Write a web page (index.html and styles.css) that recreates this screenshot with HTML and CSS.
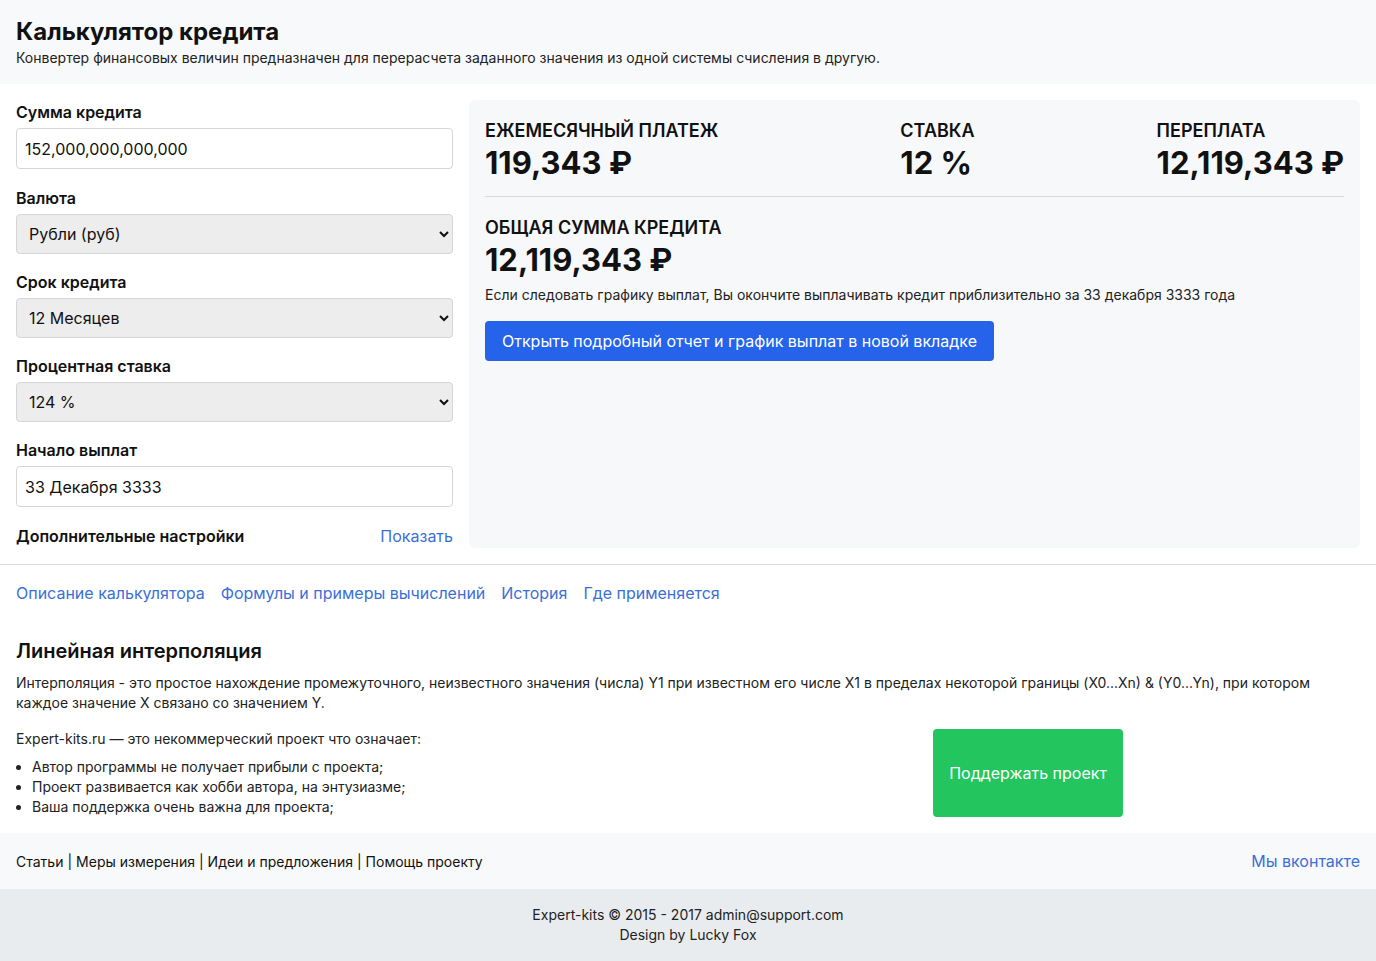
FILE: index.html
```html
<!DOCTYPE html>
<html lang="ru">
<head>
<meta charset="utf-8">
<title>Калькулятор кредита</title>
<link rel="stylesheet" href="styles.css">
</head>
<body>
<header class="page-head">
  <h1 class="page-title">Калькулятор кредита</h1>
  <p class="page-sub">Конвертер финансовых величин предназначен для перерасчета заданного значения из одной системы счисления в другую.</p>
</header>

<main class="calc">
  <form class="calc-form">
    <label class="field-label">Сумма кредита</label>
    <input class="field-input" type="text" value="152,000,000,000,000">

    <label class="field-label">Валюта</label>
    <select class="field-select"><option>Рубли (руб)</option></select>

    <label class="field-label">Срок кредита</label>
    <select class="field-select"><option>12 Месяцев</option></select>

    <label class="field-label">Процентная ставка</label>
    <select class="field-select"><option>124 %</option></select>

    <label class="field-label">Начало выплат</label>
    <input class="field-input" type="text" value="33 Декабря 3333">

    <div class="extra-row">
      <span class="extra-title">Дополнительные настройки</span>
      <a class="link" href="#">Показать</a>
    </div>
  </form>

  <section class="result">
    <div class="stats">
      <div class="stat">
        <div class="stat-label">Ежемесячный платеж</div>
        <div class="stat-value">119,343 ₽</div>
      </div>
      <div class="stat">
        <div class="stat-label">Ставка</div>
        <div class="stat-value">12 %</div>
      </div>
      <div class="stat">
        <div class="stat-label">Переплата</div>
        <div class="stat-value">12,119,343 ₽</div>
      </div>
    </div>
    <hr class="result-rule">
    <div class="stat-label">Общая сумма кредита</div>
    <div class="stat-value">12,119,343 ₽</div>
    <p class="result-note">Если следовать графику выплат, Вы окончите выплачивать кредит приблизительно за 33 декабря 3333 года</p>
    <a class="btn-primary" href="#">Открыть подробный отчет и график выплат в новой вкладке</a>
  </section>
</main>

<hr class="divider">

<nav class="tabs">
  <a class="link" href="#">Описание калькулятора</a>
  <a class="link" href="#">Формулы и примеры вычислений</a>
  <a class="link" href="#">История</a>
  <a class="link" href="#">Где применяется</a>
</nav>

<section class="article">
  <h2 class="article-title">Линейная интерполяция</h2>
  <p class="article-text">Интерполяция - это простое нахождение промежуточного, неизвестного значения (числа) Y1 при известном его числе X1 в пределах некоторой границы (X0...Xn) &amp; (Y0...Yn), при котором каждое значение X связано со значением Y.</p>
  <div class="support">
    <div class="support-text">
      <p class="support-intro">Expert-kits.ru — это некоммерческий проект что означает:</p>
      <ul class="support-list">
        <li>Автор программы не получает прибыли с проекта;</li>
        <li>Проект развивается как хобби автора, на энтузиазме;</li>
        <li>Ваша поддержка очень важна для проекта;</li>
      </ul>
    </div>
    <div class="support-side">
      <a class="btn-green" href="#">Поддержать проект</a>
    </div>
  </div>
</section>

<footer>
  <div class="foot-nav">
    <div class="foot-links">
      <a href="#">Статьи</a><span class="sep">|</span><a href="#">Меры измерения</a><span class="sep">|</span><a href="#">Идеи и предложения</a><span class="sep">|</span><a href="#">Помощь проекту</a>
    </div>
    <a class="link" href="#">Мы вконтакте</a>
  </div>
  <div class="foot-copy">
    <div>Expert-kits © 2015 - 2017 admin@support.com</div>
    <div>Design by Lucky Fox</div>
  </div>
</footer>
</body>
</html>
```

FILE: styles.css
```css
* { box-sizing: border-box; }
html, body { margin: 0; padding: 0; }
body {
  font-family: Inter, "Noto Sans", sans-serif;
  color: #111;
  background: #fff;
}
a { text-decoration: none; }
.link { color: #3a6fd8; font-size: 16px; }

.page-head {
  background: #f8f9fa;
  padding: 16px 16px 17px;
}
.page-title {
  margin: 0;
  font-size: 24px;
  font-weight: 700;
  line-height: 32px;
}
.page-sub {
  margin: 1px 0 0;
  font-size: 14px;
  line-height: 18px;
  color: #222;
}

.calc {
  display: flex;
  gap: 16px;
  padding: 16px;
  align-items: stretch;
}
.calc-form {
  width: 437px;
  flex: none;
  display: flex;
  flex-direction: column;
}
.field-label {
  font-weight: 600;
  font-size: 16px;
  line-height: 24px;
  margin-bottom: 4px;
}
.field-input, .field-select {
  height: 41px;
  border: 1px solid #d6d6d6;
  border-radius: 4px;
  font-family: inherit;
  font-size: 16px;
  color: #111;
  margin-bottom: 16px;
}
.field-input {
  padding: 0 8px;
  background: #fff;
  margin-bottom: 17px;
}
.field-select {
  height: 40px;
  padding: 0 8px;
  background-color: #ededed;
}
.extra-row {
  display: flex;
  justify-content: space-between;
  align-items: center;
  line-height: 24px;
}
.extra-title { font-weight: 600; font-size: 16px; }

.result {
  flex: 1;
  background: #f7f8fa;
  border-radius: 6px;
  padding: 18px 16px 16px;
}
.stats {
  display: flex;
  justify-content: space-between;
}
.stat-label {
  font-size: 18px;
  font-weight: 600;
  text-transform: uppercase;
  line-height: 26px;
}
.stat-value {
  font-size: 31px;
  font-weight: 700;
  line-height: 38px;
}
.result-rule {
  border: 0;
  border-top: 1px solid #d9d9d9;
  margin: 14px 0 18px;
}
.result-note {
  margin: 6px 0 16px;
  font-size: 14px;
  line-height: 20px;
  color: #222;
}
.btn-primary {
  display: inline-block;
  background: #2563eb;
  color: #fff;
  font-size: 16px;
  line-height: 24px;
  padding: 8px 17px;
  border-radius: 4px;
}

.divider {
  border: 0;
  border-top: 1px solid #d9d9d9;
  margin: 0;
}
.tabs {
  display: flex;
  gap: 16px;
  padding: 16px 16px 0;
  line-height: 24px;
}
.article {
  padding: 33px 16px 16px;
}
.article-title {
  margin: 0;
  font-size: 20px;
  font-weight: 600;
  line-height: 26px;
}
.article-text {
  margin: 9px 0 0;
  font-size: 14px;
  line-height: 20px;
  color: #222;
  padding-right: 50px;
}
.support {
  display: flex;
  margin-top: 16px;
}
.support-text {
  width: 917px;
  font-size: 14px;
  line-height: 20px;
  color: #222;
}
.support-intro { margin: 0 0 8px; }
.support-list {
  margin: 0;
  padding-left: 16px;
}
.support-side {
  flex: 1;
}
.btn-green {
  display: flex;
  align-items: center;
  justify-content: center;
  width: 190px;
  height: 88px;
  background: #22c55e;
  color: #fff;
  font-size: 16px;
  border-radius: 4px;
}

.foot-nav {
  background: #f8f9fa;
  display: flex;
  justify-content: space-between;
  align-items: center;
  height: 56px;
  padding: 0 16px;
}
.foot-links { font-size: 14px; }
.foot-links a { color: #111; }
.sep { margin: 0 4px; color: #111; }
.foot-copy {
  background: #e9ecef;
  text-align: center;
  font-size: 14px;
  line-height: 20px;
  padding: 16px 0;
  height: 72px;
  color: #222;
}
```
